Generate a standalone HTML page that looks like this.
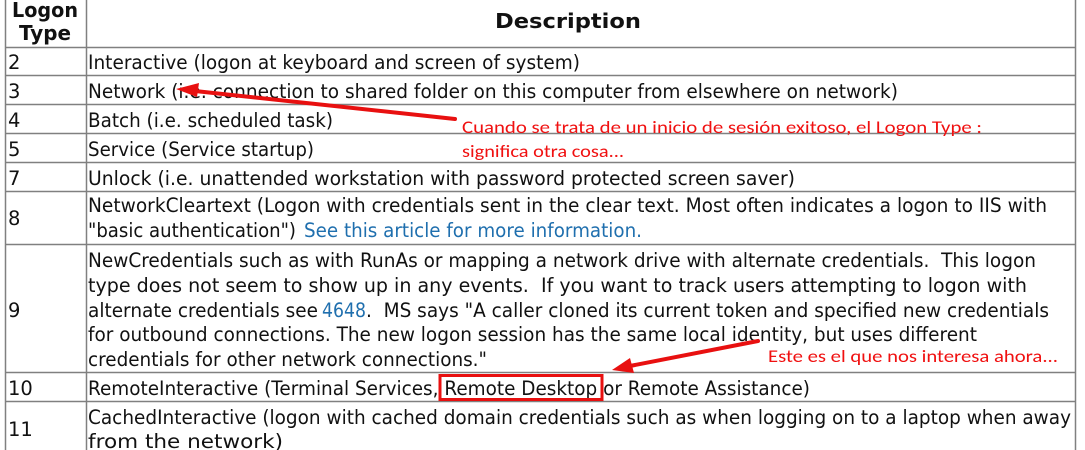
<!DOCTYPE html>
<html><head><meta charset="utf-8"><style>
html,body{margin:0;padding:0;background:#fff;width:1085px;height:450px;overflow:hidden}
svg{display:block}
.t{font-family:"DejaVu Sans",Verdana,sans-serif;font-size:19.5px;fill:#111}
.b{font-family:"DejaVu Sans",Verdana,sans-serif;font-size:20.5px;font-weight:bold;fill:#111}
.l{fill:#1f6fae}
.r{font-family:"Carlito","Liberation Sans",sans-serif;font-size:17px;fill:#f01010}
</style></head><body>
<svg width="1085" height="450" viewBox="0 0 1085 450">
<g stroke="#808080" stroke-width="1.5" fill="none">
<line x1="5.5" y1="0" x2="5.5" y2="450"/>
<line x1="86.5" y1="0" x2="86.5" y2="450"/>
<line x1="1075.5" y1="0" x2="1075.5" y2="450"/>
<line x1="5" y1="47.5" x2="1076" y2="47.5"/>
<line x1="5" y1="75.5" x2="1076" y2="75.5"/>
<line x1="5" y1="104.5" x2="1076" y2="104.5"/>
<line x1="5" y1="133.5" x2="1076" y2="133.5"/>
<line x1="5" y1="162.5" x2="1076" y2="162.5"/>
<line x1="5" y1="191.5" x2="1076" y2="191.5"/>
<line x1="5" y1="244.5" x2="1076" y2="244.5"/>
<line x1="5" y1="372.5" x2="1076" y2="372.5"/>
<line x1="5" y1="401.5" x2="1076" y2="401.5"/>
</g>
<text class="b" x="45" y="17" text-anchor="middle" textLength="66" lengthAdjust="spacingAndGlyphs">Logon</text>
<text class="b" x="45" y="40" text-anchor="middle" textLength="52" lengthAdjust="spacingAndGlyphs">Type</text>
<text class="b" x="568" y="28" text-anchor="middle" textLength="146" lengthAdjust="spacingAndGlyphs">Description</text>

<text class="t" x="8" y="69">2</text>
<text class="t" x="88" y="69" textLength="492" lengthAdjust="spacingAndGlyphs">Interactive (logon at keyboard and screen of system)</text>
<text class="t" x="8" y="98">3</text>
<text class="t" x="88" y="98" textLength="810" lengthAdjust="spacingAndGlyphs">Network (i.e. connection to shared folder on this computer from elsewhere on network)</text>
<text class="t" x="8" y="127">4</text>
<text class="t" x="88" y="127" textLength="245" lengthAdjust="spacingAndGlyphs">Batch (i.e. scheduled task)</text>
<text class="t" x="8" y="156">5</text>
<text class="t" x="88" y="156" textLength="226" lengthAdjust="spacingAndGlyphs">Service (Service startup)</text>
<text class="t" x="8" y="185">7</text>
<text class="t" x="88" y="185" textLength="707" lengthAdjust="spacingAndGlyphs">Unlock (i.e. unattended workstation with password protected screen saver)</text>
<text class="t" x="8" y="225">8</text>
<text class="t" x="88" y="212" textLength="959" lengthAdjust="spacingAndGlyphs">NetworkCleartext (Logon with credentials sent in the clear text. Most often indicates a logon to IIS with</text>
<text class="t" x="88" y="237" textLength="208" lengthAdjust="spacingAndGlyphs">"basic authentication")</text>
<text class="t l" x="304" y="237" textLength="338" lengthAdjust="spacingAndGlyphs">See this article for more information.</text>
<text class="t" x="8" y="317">9</text>
<text class="t" x="88" y="267" textLength="948" lengthAdjust="spacingAndGlyphs" xml:space="preserve">NewCredentials such as with RunAs or mapping a network drive with alternate credentials.  This logon</text>
<text class="t" x="88" y="292" textLength="939" lengthAdjust="spacingAndGlyphs" xml:space="preserve">type does not seem to show up in any events.  If you want to track users attempting to logon with</text>
<text class="t" x="88" y="317" textLength="230" lengthAdjust="spacingAndGlyphs">alternate credentials see</text>
<text class="t l" x="322" y="317" textLength="44" lengthAdjust="spacingAndGlyphs">4648</text>
<text class="t" x="366" y="317" textLength="683" lengthAdjust="spacingAndGlyphs" xml:space="preserve">.  MS says "A caller cloned its current token and specified new credentials</text>
<text class="t" x="88" y="341" textLength="889" lengthAdjust="spacingAndGlyphs">for outbound connections. The new logon session has the same local identity, but uses different</text>
<text class="t" x="88" y="366" textLength="399" lengthAdjust="spacingAndGlyphs">credentials for other network connections."</text>
<text class="t" x="8" y="395">10</text>
<text class="t" x="88" y="395" textLength="722" lengthAdjust="spacingAndGlyphs">RemoteInteractive (Terminal Services, Remote Desktop or Remote Assistance)</text>
<text class="t" x="8" y="436">11</text>
<text class="t" x="88" y="424" textLength="983" lengthAdjust="spacingAndGlyphs">CachedInteractive (logon with cached domain credentials such as when logging on to a laptop when away</text>
<text class="t" x="88" y="448" textLength="195" lengthAdjust="spacingAndGlyphs">from the network)</text>

<rect x="440" y="375.5" width="162" height="24" fill="none" stroke="#e81010" stroke-width="3"/>
<text class="r" x="462" y="133" textLength="520" lengthAdjust="spacingAndGlyphs">Cuando se trata de un inicio de sesión exitoso, el Logon Type :</text>
<text class="r" x="462" y="157" textLength="162" lengthAdjust="spacingAndGlyphs">significa otra cosa...</text>
<text class="r" x="768" y="362" textLength="290" lengthAdjust="spacingAndGlyphs">Este es el que nos interesa ahora...</text>
<g stroke="#e81010" stroke-width="4" fill="#e81010" stroke-linecap="round">
<line x1="455" y1="119" x2="195" y2="91"/>
<polygon points="176,89 199,83 197,97" stroke="none"/>
<line x1="758" y1="341" x2="630" y2="366"/>
<polygon points="612,370 630,358 634,373" stroke="none"/>
</g>
</svg>
</body></html>
